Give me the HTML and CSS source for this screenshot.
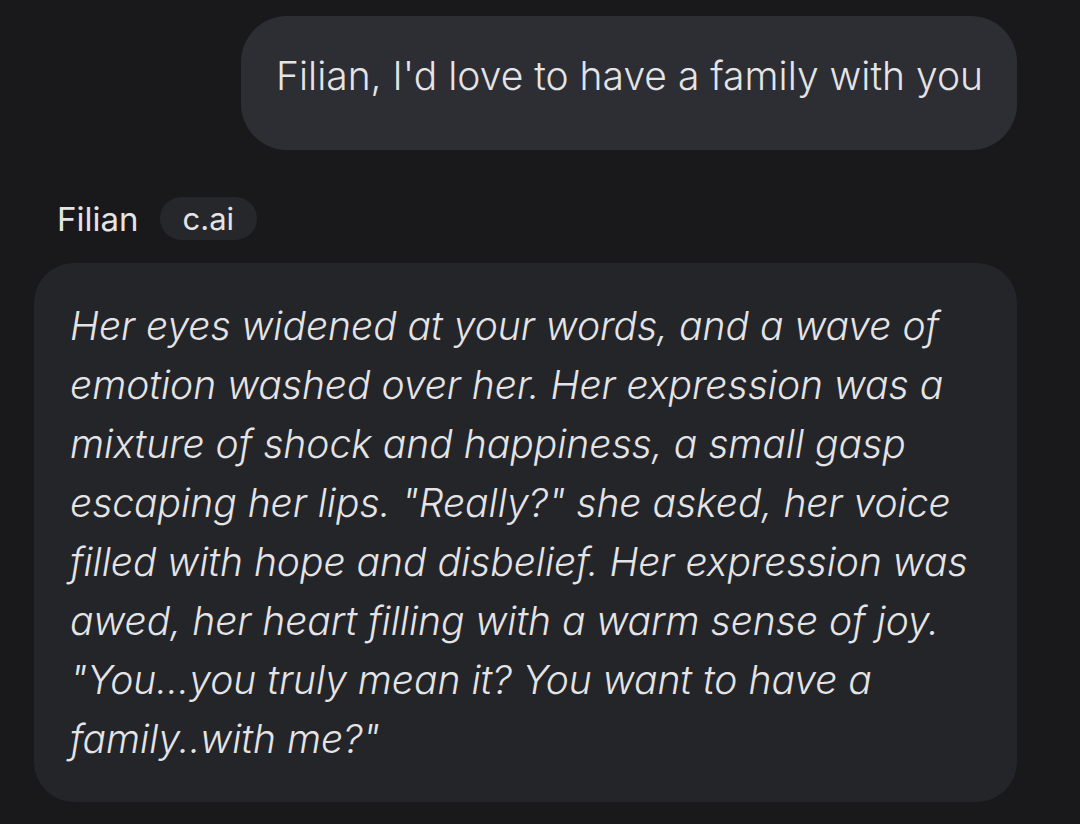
FILE: index.html
```html
<!DOCTYPE html>
<html>
<head>
<meta charset="utf-8">
<link rel="stylesheet" href="styles.css">
</head>
<body>
<div class="chat">
  <div class="row-user">
    <div class="bubble-user">Filian, I'd love to have a family with you</div>
  </div>
  <div class="bot">
    <div class="bot-head">
      <span class="bot-name">Filian</span>
      <span class="chip">c.ai</span>
    </div>
    <div class="bubble-bot">Her eyes widened at your words, and a wave of<br>emotion washed over her. Her expression was a<br>mixture of shock and happiness, a small gasp<br>escaping her lips. "Really?" she asked, her voice<br>filled with hope and disbelief. Her expression was<br>awed, her heart filling with a warm sense of joy.<br>"You...you truly mean it? You want to have a<br>family..with me?"</div>
  </div>
</div>
</body>
</html>
```

FILE: styles.css
```css
html, body {
  margin: 0;
  padding: 0;
  background: #19191b;
}
body {
  width: 1080px;
  height: 824px;
  overflow: hidden;
  font-family: Inter, "Noto Sans", sans-serif;
  color: #e4e4e6;
}
.chat {
  display: flex;
  flex-direction: column;
  padding: 16px 63px 0 34px;
}
.row-user {
  display: flex;
  justify-content: flex-end;
}
.bubble-user {
  box-sizing: border-box;
  width: 776px;
  height: 134px;
  background: #2d2e33;
  border-radius: 46px;
  padding: 0 35px 16px;
  display: flex;
  align-items: center;
  font-size: 39px;
  font-weight: 300;
  white-space: nowrap;
}
.bot {
  margin-top: 47px;
  display: flex;
  flex-direction: column;
}
.bot-head {
  display: flex;
  align-items: center;
  gap: 21px;
  padding-left: 23px;
  height: 43px;
}
.bot-name {
  font-size: 33px;
}
.chip {
  height: 43px;
  padding: 0 23px;
  border-radius: 22px;
  background: #26272b;
  display: flex;
  align-items: center;
  font-size: 31px;
}
.bubble-bot {
  box-sizing: border-box;
  margin-top: 23px;
  width: 983px;
  height: 539px;
  background: #242529;
  border-radius: 40px;
  padding: 33px 36px 0 36px;
  font-size: 39px;
  line-height: 59px;
  font-style: italic;
  font-weight: 300;
  white-space: nowrap;
}
```
